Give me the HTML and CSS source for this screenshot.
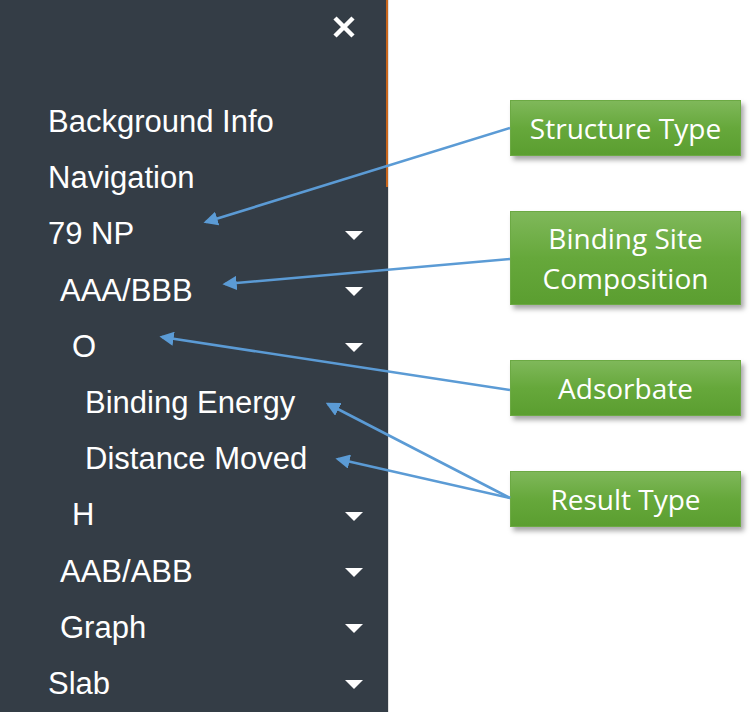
FILE: index.html
```html
<!DOCTYPE html>
<html lang="en">
  <head>
    <meta charset="UTF-8" />
    <meta name="viewport" content="width=device-width, initial-scale=1.0" />
    <title>Sidebar navigation</title>
    <link rel="stylesheet" href="styles.css">
  </head>
  <body>
    <div id="page">
      <nav class="sidebar">
        <div class="close-row">
          <svg class="close" width="24" height="24" viewBox="0 0 24 24">
            <path d="M3 3 L21 21 M21 3 L3 21" stroke="#fff" stroke-width="4.5" stroke-linecap="butt" />
          </svg>
        </div>
        <ul class="menu">
          <li class="item lv0">Background Info</li>
          <li class="item lv0">Navigation</li>
          <li class="item lv0 drop">79 NP</li>
          <li class="item lv1 drop">AAA/BBB</li>
          <li class="item lv2 drop">O</li>
          <li class="item lv3">Binding Energy</li>
          <li class="item lv3">Distance Moved</li>
          <li class="item lv2 drop">H</li>
          <li class="item lv1 drop">AAB/ABB</li>
          <li class="item lv1 drop">Graph</li>
          <li class="item lv0 drop">Slab</li>
        </ul>
      </nav>
      <div class="notes">
        <div class="callout">Structure Type</div>
        <div class="callout tall">Binding Site<br />Composition</div>
        <div class="callout">Adsorbate</div>
        <div class="callout">Result Type</div>
      </div>
      <!-- pointer lines from the labels to the menu items -->
      <svg class="arrows" width="754" height="712" viewBox="0 0 754 712">
        <defs>
          <marker id="head" markerWidth="5.5" markerHeight="5.5" refX="4.5" refY="2.75" orient="auto" markerUnits="strokeWidth">
            <path d="M0 0 L5.5 2.75 L0 5.5 z" fill="#5b9bd5" />
          </marker>
        </defs>
        <g stroke="#5b9bd5" stroke-width="2.6" fill="none" marker-end="url(#head)">
          <line x1="510" y1="128" x2="206" y2="222" />
          <line x1="510" y1="259" x2="225" y2="284" />
          <line x1="510" y1="390" x2="162" y2="337" />
          <line x1="510" y1="498" x2="328" y2="404" />
          <line x1="510" y1="498" x2="338" y2="459" />
        </g>
      </svg>
    </div>
  </body>
</html>
```
FILE: styles.css
```css
* {
  padding: 0;
  margin: 0;
  box-sizing: border-box;
}
ul,
li {
  list-style: none;
}
body {
  background: #fff;
  font-family: "Liberation Sans", Arial, sans-serif;
}
#page {
  position: relative;
  display: flex;
  width: 754px;
  height: 712px;
  overflow: hidden;
}
.sidebar {
  flex: none;
  width: 389px;
  height: 712px;
  border-right: 1px solid #e2e2e2;
  background-color: #343d46;
  background-image: linear-gradient(to bottom, #c8661c 0, #c8661c 187px, #343d46 187px);
  background-size: 2px 100%;
  background-position: right top;
  background-repeat: no-repeat;
}
.close-row {
  display: flex;
  justify-content: flex-end;
  padding: 15px 32px 0 0;
  height: 94px;
}
.menu {
  padding-right: 25px;
}
.item {
  display: flex;
  align-items: center;
  justify-content: space-between;
  height: 56.2px;
  color: #fff;
  font-size: 31px;
  white-space: nowrap;
}
.lv0 {
  padding-left: 48px;
}
.lv1 {
  padding-left: 60px;
}
.lv2 {
  padding-left: 72px;
}
.lv3 {
  padding-left: 85px;
}
.drop::after {
  content: "";
  width: 0;
  height: 0;
  border-left: 9px solid transparent;
  border-right: 9px solid transparent;
  border-top: 9px solid #fff;
  margin-top: 2px;
}
.notes {
  display: flex;
  flex-direction: column;
  gap: 55px;
  padding: 100px 0 0 121px;
}
.callout {
  width: 231px;
  height: 56px;
  display: flex;
  align-items: center;
  justify-content: center;
  text-align: center;
  color: #fff;
  font-family: "Open Sans", "Noto Sans", sans-serif;
  font-size: 28px;
  line-height: 40px;
  background: linear-gradient(to bottom, #7fb85a, #66a83b 50%, #5b9e30);
  border: 1px solid #6ca944;
  box-shadow: 3px 4px 5px rgba(0, 0, 0, 0.35);
}
.callout.tall {
  height: 94px;
}
.arrows {
  position: absolute;
  left: 0;
  top: 0;
  pointer-events: none;
}
```
